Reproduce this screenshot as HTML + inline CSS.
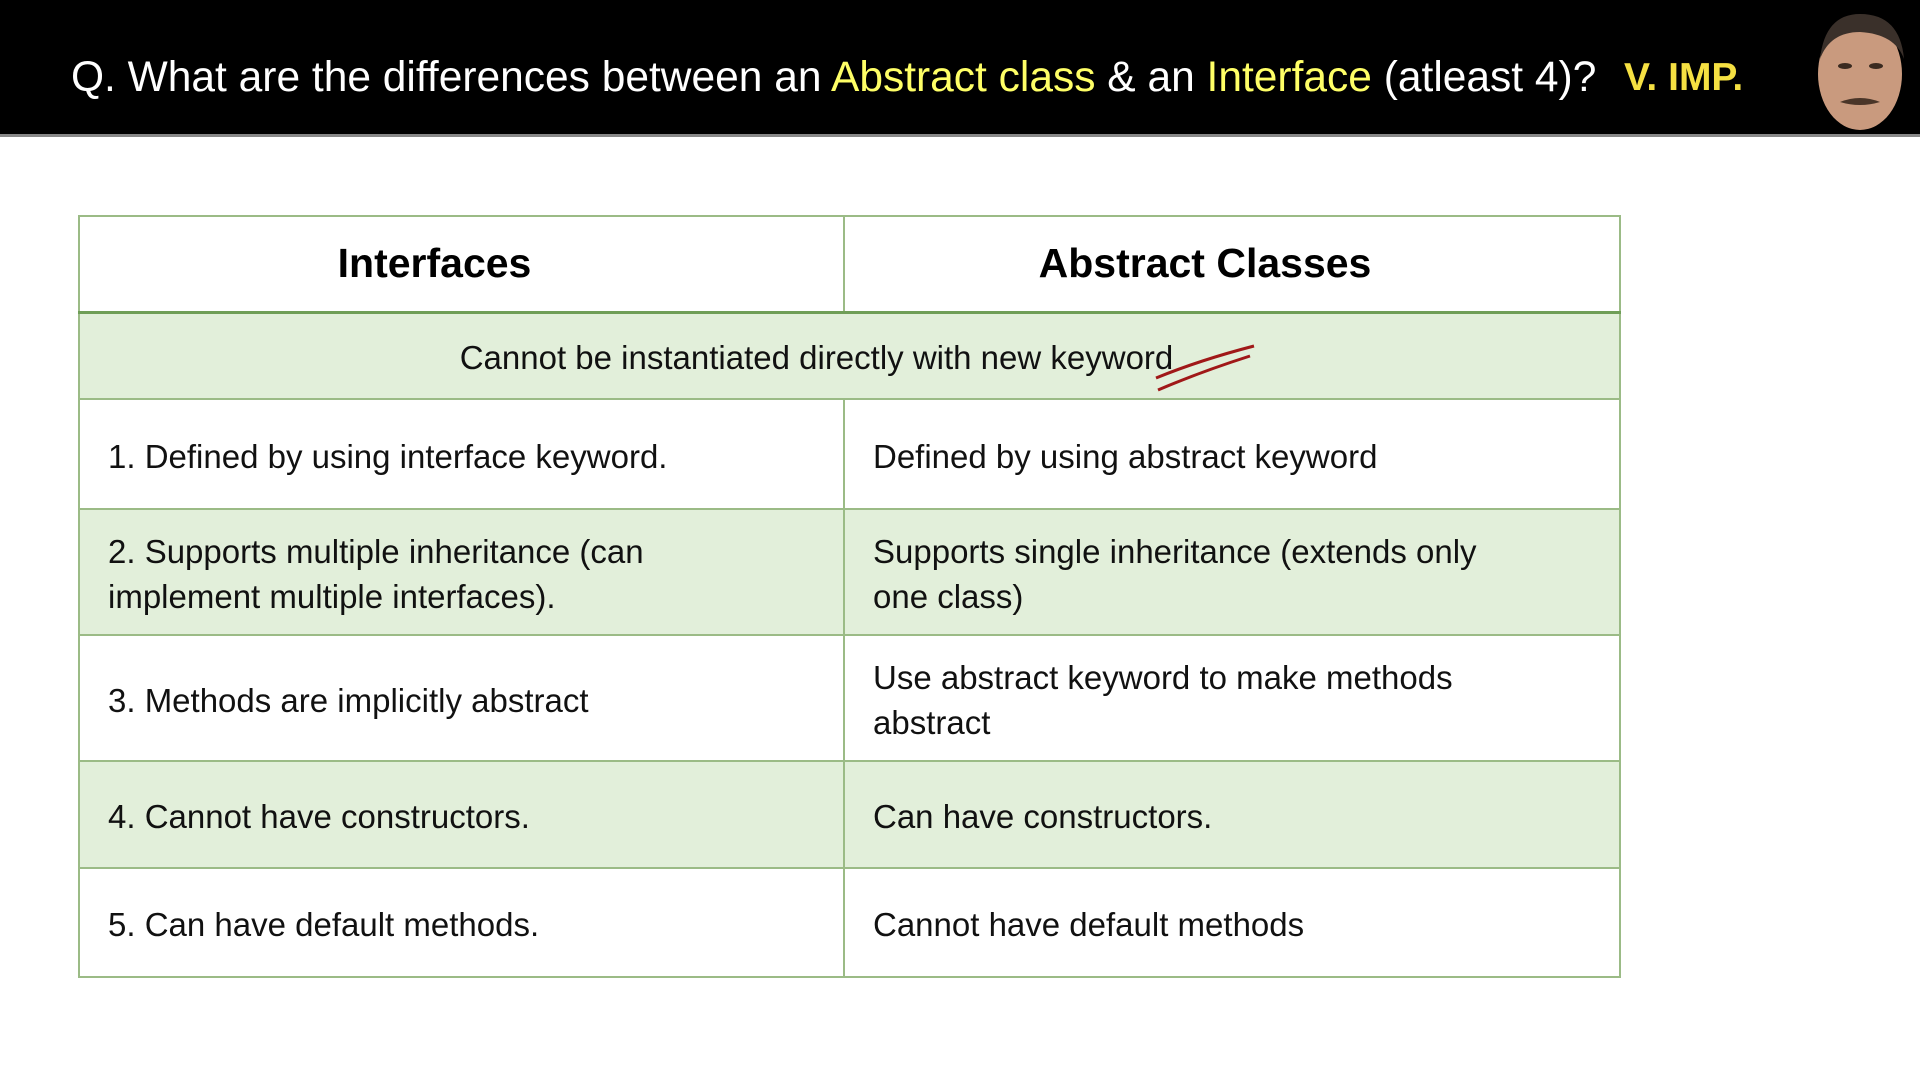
<!DOCTYPE html>
<html><head><meta charset="utf-8"><style>
*{margin:0;padding:0;box-sizing:border-box}
body{width:1920px;height:1080px;background:#fff;position:relative;overflow:hidden;font-family:"Liberation Sans",sans-serif}
.hdr{position:absolute;left:0;top:0;width:1920px;height:137px;background:#000;border-bottom:3px solid #888}
.title{position:absolute;left:71px;top:54px;font-size:42.5px;color:#fff;white-space:nowrap}
.y{color:#ffff66}
.imp{position:absolute;left:1624px;top:56px;font-size:39px;font-weight:bold;color:#f5e042;white-space:nowrap}
table{position:absolute;left:78px;top:215px;width:1543px;border-collapse:collapse}
td{border:2px solid #9bbb86;font-size:33px;color:#111;padding:4px 0 0 28px;vertical-align:middle;line-height:45px}
th{border:2px solid #9bbb86;border-bottom:3px solid #6f9e57;font-size:41px;font-weight:bold;height:96px;color:#000;padding-right:54px}
.g td{background:#e2efda}
</style></head><body>
<div class="hdr"></div>
<div class="title">Q. What are the differences between an <span class="y">Abstract class</span> &amp; an <span class="y">Interface</span> (atleast 4)?</div>
<div class="imp">V. IMP.</div>
<svg style="position:absolute;left:1800px;top:4px" width="115" height="132">
<ellipse cx="60" cy="70" rx="42" ry="56" fill="#c99a7e"/>
<path d="M20 55 Q25 10 60 10 Q100 10 104 55 Q95 30 60 28 Q30 28 20 55Z" fill="#3a302a"/>
<path d="M40 98 Q60 90 80 98 Q60 104 40 98Z" fill="#4a3528"/>
<ellipse cx="45" cy="62" rx="7" ry="3" fill="#3a2a20"/><ellipse cx="76" cy="62" rx="7" ry="3" fill="#3a2a20"/>
</svg>
<table>
<tr><th style="width:765px">Interfaces</th><th>Abstract Classes</th></tr>
<tr class="g"><td colspan="2" style="height:87px;text-align:center;padding:4px 66px 0 0">Cannot be instantiated directly with new keyword</td></tr>
<tr><td style="height:110px">1. Defined by using interface keyword.</td><td>Defined by using abstract keyword</td></tr>
<tr class="g"><td style="height:126px">2. Supports multiple inheritance (can<br>implement multiple interfaces).</td><td>Supports single inheritance (extends only<br>one class)</td></tr>
<tr><td style="height:126px">3. Methods are implicitly abstract</td><td>Use abstract keyword to make methods<br>abstract</td></tr>
<tr class="g"><td style="height:107px">4. Cannot have constructors.</td><td>Can have constructors.</td></tr>
<tr><td style="height:109px">5. Can have default methods.</td><td>Cannot have default methods</td></tr>
</table>
<svg style="position:absolute;left:1150px;top:340px" width="110" height="55">
<path d="M6 38 Q50 20 104 6" stroke="#a01818" stroke-width="3" fill="none"/>
<path d="M8 50 Q50 32 100 16" stroke="#a01818" stroke-width="3" fill="none"/>
</svg>
</body></html>
